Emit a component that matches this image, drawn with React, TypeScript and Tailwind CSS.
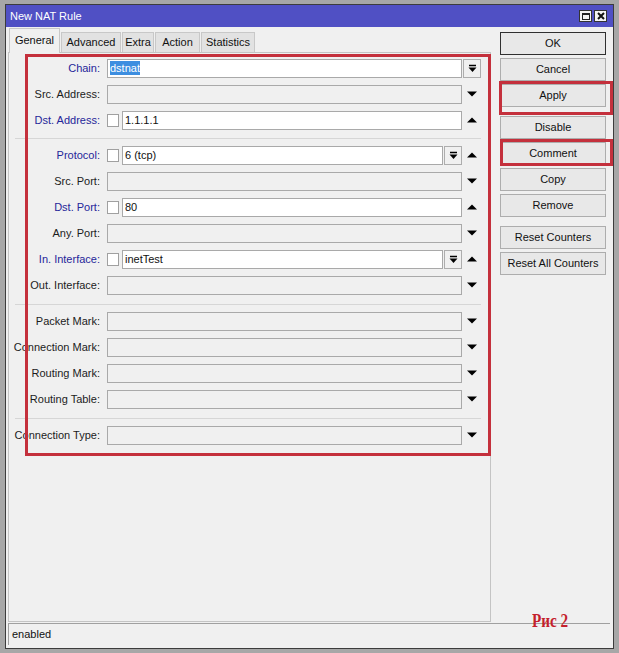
import React from "react";

type Arrow = "down" | "up" | "none";

interface RowProps {
  label: string;
  blue?: boolean;
  check?: boolean;
  value?: string;
  selected?: boolean;
  box?: boolean;
  arrow?: Arrow;
  chain?: boolean;
}

const FONT = { fontFamily: '"Liberation Sans", Arial, sans-serif' };

function DownArrow() {
  return (
    <svg width="10" height="6" viewBox="0 0 10 6">
      <path d="M0 0.5h10L5 5.5z" fill="#000" />
    </svg>
  );
}

function UpArrow() {
  return (
    <svg width="10" height="6" viewBox="0 0 10 6">
      <path d="M0 5.5h10L5 0.5z" fill="#000" />
    </svg>
  );
}

function BoxButton() {
  return (
    <div className="flex h-[19px] w-[18px] items-center justify-center border border-[#adadad] bg-[#f0f0f0]">
      <svg width="9" height="9" viewBox="0 0 9 9">
        <path d="M1 1.5h7" stroke="#000" strokeWidth="1.5" />
        <path d="M0.5 3.5h8L4.5 8z" fill="#000" />
      </svg>
    </div>
  );
}

function Checkbox() {
  return <div className="mr-[3px] h-[13px] w-[12px] border border-[#a0a0a0] bg-white" />;
}

function Row({ label, blue, check, value, selected, box, arrow = "down", chain }: RowProps) {
  const filled = value !== undefined;
  return (
    <div className="flex h-[26px] items-center">
      <div
        className={`w-[91px] whitespace-nowrap text-right ${blue ? "text-[#26269a]" : "text-[#1c1c1c]"}`}
      >
        {label}:
      </div>
      <div className="ml-[7px] flex w-[355px] items-center">
        {check && <Checkbox />}
        <div
          className={`flex h-[19px] flex-1 items-center border border-[#a9a9a9] px-[2px] text-[#111] ${
            filled ? "bg-white" : "bg-[#f0f0f0]"
          }`}
        >
          {selected ? <span className="bg-[#3d8ee0] leading-[14px] text-white">{value}</span> : value}
        </div>
        {box && (
          <div className="ml-[1px]">
            <BoxButton />
          </div>
        )}
      </div>
      <div className="flex w-[19px] justify-center">
        {chain ? (
          <div className="ml-[1px]">
            <BoxButton />
          </div>
        ) : arrow === "down" ? (
          <DownArrow />
        ) : arrow === "up" ? (
          <UpArrow />
        ) : null}
      </div>
    </div>
  );
}

function Separator({ top }: { top: string }) {
  return (
    <div className={`${top} pb-[3px]`}>
      <div className="ml-[6px] h-px w-[466px] bg-[#d6d6d6]" />
    </div>
  );
}

function SideButton({ label, primary, className = "" }: { label: string; primary?: boolean; className?: string }) {
  return (
    <div
      className={`flex h-[23px] w-[106px] items-center justify-center border bg-[#e8e8e8] text-[#111] ${
        primary ? "border-[#303030]" : "border-[#adadad]"
      } ${className}`}
    >
      {label}
    </div>
  );
}

const tabs = [
  { name: "General", w: "w-[51px]", active: true },
  { name: "Advanced", w: "w-[60px]" },
  { name: "Extra", w: "w-[32px]" },
  { name: "Action", w: "w-[45px]" },
  { name: "Statistics", w: "w-[54px]" },
];

export default function App() {
  return (
    <div
      className="relative h-[653px] w-[619px] bg-[#a7a7a7] px-[5px] pb-[4px] pt-[4px] text-[11px]"
      style={FONT}
    >
      <div className="flex h-full flex-col border border-[#3c3c3c] bg-[#f0f0f0]">
        {/* title bar */}
        <div className="flex h-[22px] items-center justify-between bg-[#5050c4] pl-[4px] pr-[6px]">
          <span className="text-[11px] text-white">New NAT Rule</span>
          <div className="flex gap-[2px]">
            <div className="flex h-[12px] w-[13px] items-center justify-center border border-[#333] bg-[#f4f4f4]">
              <div className="h-[7px] w-[8px] border border-t-2 border-[#222]" />
            </div>
            <div className="flex h-[12px] w-[13px] items-center justify-center border border-[#333] bg-[#f4f4f4]">
              <svg width="8" height="8" viewBox="0 0 8 8">
                <path d="M1 1l6 6M7 1l-6 6" stroke="#111" strokeWidth="2" />
              </svg>
            </div>
          </div>
        </div>

        {/* body */}
        <div className="flex flex-1">
          <div className="ml-[2px] flex w-[483px] flex-col">
            <div className="mt-[1px] flex h-[24px] items-end pl-[1px]">
              {tabs.map((t) =>
                t.active ? (
                  <div
                    key={t.name}
                    className={`${t.w} relative z-10 -mb-px flex h-[25px] items-center justify-center border border-b-0 border-[#c8c8c8] bg-[#f0f0f0] pb-[2px] text-[#111]`}
                  >
                    {t.name}
                  </div>
                ) : (
                  <div
                    key={t.name}
                    className={`${t.w} ml-[1px] flex h-[20px] items-center justify-center border border-b-0 border-[#c8c8c8] bg-[#e2e2e2] text-[#111]`}
                  >
                    {t.name}
                  </div>
                ),
              )}
            </div>
            <div className="h-[570px] border border-[#c4c4c4] pt-[2px]">
              <Row label="Chain" blue value="dstnat" selected chain />
              <Row label="Src. Address" />
              <Row label="Dst. Address" blue check value="1.1.1.1" arrow="up" />
              <Separator top="pt-[5px]" />
              <Row label="Protocol" blue check value="6 (tcp)" box arrow="up" />
              <Row label="Src. Port" />
              <Row label="Dst. Port" blue check value="80" arrow="up" />
              <Row label="Any. Port" />
              <Row label="In. Interface" blue check value="inetTest" box arrow="up" />
              <Row label="Out. Interface" />
              <Separator top="pt-[6px]" />
              <Row label="Packet Mark" />
              <Row label="Connection Mark" />
              <Row label="Routing Mark" />
              <Row label="Routing Table" />
              <Separator top="pt-[6px]" />
              <Row label="Connection Type" />
            </div>
          </div>

          <div className="ml-[9px] flex flex-col gap-[3px] pt-[5px]">
            <SideButton label="OK" primary />
            <SideButton label="Cancel" />
            <SideButton label="Apply" />
            <SideButton label="Disable" className="mt-[6px]" />
            <SideButton label="Comment" />
            <SideButton label="Copy" />
            <SideButton label="Remove" />
            <SideButton label="Reset Counters" className="mt-[6px]" />
            <SideButton label="Reset All Counters" />
          </div>
        </div>

        {/* status bar */}
        <div className="mb-[3px] ml-[2px] mr-[3px] mt-[1px] flex h-[22px] items-center border-l border-t border-[#a0a0a0] pl-[3px] text-[#111]">
          enabled
        </div>
      </div>

      {/* red highlight annotations */}
      <div className="pointer-events-none absolute left-[25px] top-[54px] h-[402px] w-[466px] border-[3px] border-[#c4303c]" />
      <div className="pointer-events-none absolute left-[499px] top-[81px] h-[34px] w-[114px] border-[3px] border-[#c4303c]" />
      <div className="pointer-events-none absolute left-[500px] top-[139px] h-[27px] w-[113px] border-[3px] border-[#c4303c]" />
      <div
        className="absolute left-[532px] top-[611px] origin-left scale-x-[0.8] text-[19px] font-bold leading-none text-[#c41f2d]"
        style={{ fontFamily: '"Liberation Serif", serif' }}
      >
        Рис 2
      </div>
    </div>
  );
}
